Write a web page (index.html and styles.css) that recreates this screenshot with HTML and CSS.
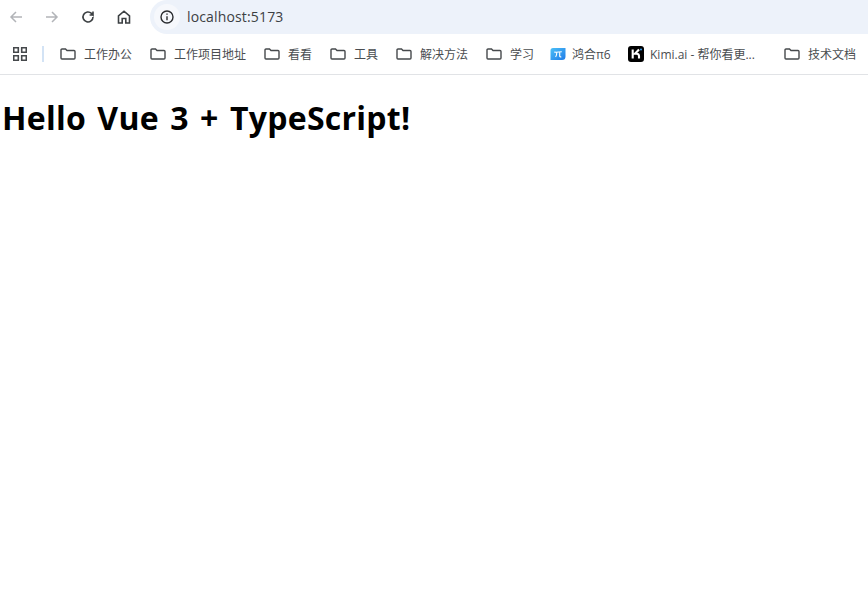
FILE: index.html
```html
<!DOCTYPE html>
<html lang="en">
<head>
<meta charset="utf-8">
<title>localhost:5173</title>
<link rel="stylesheet" href="styles.css">
</head>
<body>
<header class="chrome">
  <div class="toolbar">
    <div class="nav">
      <svg class="ico back" viewBox="0 0 16 16"><path d="M14 8H3M8 3 3 8l5 5"/></svg>
      <svg class="ico fwd" viewBox="0 0 16 16"><path d="M2 8h11M8 3l5 5-5 5"/></svg>
      <svg class="ico dark reload" viewBox="0 0 16 16"><path d="M13 8a5 5 0 1 1-1.500-3.600L13 6V2.500M13 6H9.600"/></svg>
      <svg class="ico dark home" viewBox="0 0 16 16"><path d="M2.500 14V6.800L8 2.200l5.500 4.600V14h-3.700V9.500H6.200V14z"/></svg>
    </div>
    <div class="omnibox">
      <span class="info"><svg viewBox="0 0 16 16"><circle cx="8" cy="8" r="6"/><path d="M8 7.200v4M8 4.600v1.200"/></svg></span>
      <span class="url">localhost:5173</span>
    </div>
  </div>
  <nav class="bookmarks">
    <svg class="apps" viewBox="0 0 14 14"><path d="M.7.7h4.600v4.600H.7zM8.700.7h4.600v4.600H8.700zM.7 8.700h4.600v4.600H.7zM8.700 8.700h4.600v4.600H8.700z"/></svg>
    <span class="sep"></span>
    <a class="bm w1"><svg class="folder" viewBox="0 0 16 12"><path d="M1 2a1 1 0 0 1 1-1h3.500l1.500 1.500h7a1 1 0 0 1 1 1V10a1 1 0 0 1-1 1H2a1 1 0 0 1-1-1z"/></svg><span>工作办公</span></a>
    <a class="bm w2"><svg class="folder" viewBox="0 0 16 12"><path d="M1 2a1 1 0 0 1 1-1h3.500l1.500 1.500h7a1 1 0 0 1 1 1V10a1 1 0 0 1-1 1H2a1 1 0 0 1-1-1z"/></svg><span>工作项目地址</span></a>
    <a class="bm w3"><svg class="folder" viewBox="0 0 16 12"><path d="M1 2a1 1 0 0 1 1-1h3.500l1.500 1.500h7a1 1 0 0 1 1 1V10a1 1 0 0 1-1 1H2a1 1 0 0 1-1-1z"/></svg><span>看看</span></a>
    <a class="bm w4"><svg class="folder" viewBox="0 0 16 12"><path d="M1 2a1 1 0 0 1 1-1h3.500l1.500 1.500h7a1 1 0 0 1 1 1V10a1 1 0 0 1-1 1H2a1 1 0 0 1-1-1z"/></svg><span>工具</span></a>
    <a class="bm w5"><svg class="folder" viewBox="0 0 16 12"><path d="M1 2a1 1 0 0 1 1-1h3.500l1.500 1.500h7a1 1 0 0 1 1 1V10a1 1 0 0 1-1 1H2a1 1 0 0 1-1-1z"/></svg><span>解决方法</span></a>
    <a class="bm w6"><svg class="folder" viewBox="0 0 16 12"><path d="M1 2a1 1 0 0 1 1-1h3.500l1.500 1.500h7a1 1 0 0 1 1 1V10a1 1 0 0 1-1 1H2a1 1 0 0 1-1-1z"/></svg><span>学习</span></a>
    <a class="bm fav w7"><svg class="pi" viewBox="0 0 16 13"><defs><linearGradient id="pig" x1="0" y1="0" x2="1" y2="1"><stop offset="0" stop-color="#4cc0f7"/><stop offset="1" stop-color="#1f7be8"/></linearGradient></defs><path d="M3 .5h12.500V9a3.500 3.500 0 0 1-3.500 3.500H.5V3A2.500 2.500 0 0 1 3 .5z" fill="url(#pig)"/><path d="M4.300 4.600c2 .2 5 0 7.500-.3M6.800 4.500c0 2-.3 3.700-1.200 5M9.700 4.400v4c0 1 .7 1.200 1.600.8" stroke="#fff" stroke-width="1.100" fill="none"/></svg><span>鸿合π6</span></a>
    <a class="bm fav w8"><svg class="kimi" viewBox="0 0 16 16"><rect width="16" height="16" rx="3" fill="#000"/><path d="M4.700 3.500v9M11 3.500 7 7.700h1.500c1.700 0 2.500 1 2.500 2.300v2.500" stroke="#fff" stroke-width="2.100" fill="none"/><circle cx="13" cy="3.500" r="1" fill="#3aa0f0"/></svg><span>Kimi.ai - 帮你看更...</span></a>
    <a class="bm w9"><svg class="folder" viewBox="0 0 16 12"><path d="M1 2a1 1 0 0 1 1-1h3.500l1.500 1.500h7a1 1 0 0 1 1 1V10a1 1 0 0 1-1 1H2a1 1 0 0 1-1-1z"/></svg><span>技术文档</span></a>
  </nav>
</header>
<main class="page">
  <h1>Hello Vue 3 + TypeScript!</h1>
</main>
</body>
</html>
```
FILE: styles.css
```css
* { box-sizing: border-box; }
html, body { margin: 0; padding: 0; background: #fff; overflow: hidden; }
body { font-family: "Open Sans", "Noto Sans CJK SC", sans-serif; color: #000; height: 600px; }
.chrome { height: 75px; border-bottom: 1px solid #e1e3e6; }
.toolbar { height: 34px; display: flex; align-items: center; }
.nav { display: flex; align-items: center; gap: 20px; padding-left: 8px; width: 150px; }
.ico { width: 16px; height: 16px; fill: none; stroke: #b2b4b8; stroke-width: 1.500; flex: none; }
.ico.dark { stroke: #3c4043; stroke-width: 1.600; }
.omnibox { flex: 1; height: 34px; background: #edf2fa; border-radius: 17px 0 0 17px; display: flex; align-items: center; padding-left: 4px; }
.info { width: 26px; height: 26px; border-radius: 50%; background: #f6f8fc; display: flex; align-items: center; justify-content: center; }
.info svg { width: 16px; height: 16px; fill: none; stroke: #2b2d30; stroke-width: 1.400; }
.url { margin: 0 0 2px 7px; font-size: 14px; letter-spacing: .15px; color: #3c4043; }
.bookmarks { height: 40px; display: flex; align-items: center; padding-left: 13px; font-size: 12px; color: #4a4d50; }
.apps { width: 14px; height: 14px; fill: none; stroke: #45484b; stroke-width: 1.600; flex: none; }
.sep { width: 2px; height: 16px; background: #d3e3f5; margin-left: 15px; flex: none; }
.bm { display: flex; align-items: center; flex: none; white-space: nowrap; }
.folder { width: 16px; height: 12px; fill: none; stroke: #46494c; stroke-width: 1.400; margin-right: 8px; flex: none; }
.pi, .kimi { width: 16px; height: 16px; margin-right: 6px; flex: none; }
.w1 { margin-left: 16px; width: 90px; }
.w2 { width: 114px; }
.w3 { width: 66px; }
.w4 { width: 66px; }
.w5 { width: 90px; }
.w6 { width: 64px; }
.w7 { width: 78px; }
.w8 { width: 156px; }
.w9 { width: 76px; }
.page { padding: 0 2px; }
h1 { margin: 0; padding-top: 21px; font-size: 32px; line-height: 44px; font-weight: 700; letter-spacing: .25px; word-spacing: 2.800px; }
```
